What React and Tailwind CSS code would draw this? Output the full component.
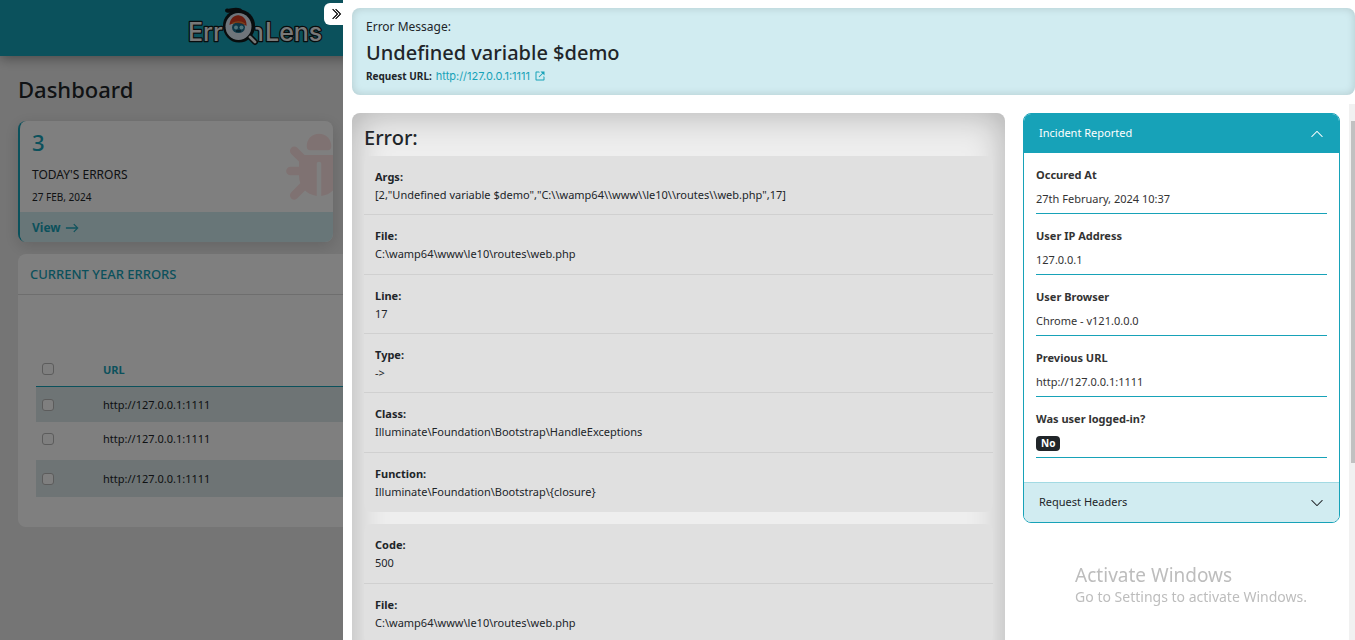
import { useState } from "react";
import { BsChevronDown, BsArrowRight, BsChevronDoubleRight } from "react-icons/bs";
import { BiLinkExternal } from "react-icons/bi";

const FRAMES = [
  {
    box: "min-h-[356px]",
    fields: [
      ["Args:", '[2,"Undefined variable $demo","C:\\\\wamp64\\\\www\\\\le10\\\\routes\\\\web.php",17]'],
      ["File:", "C:\\wamp64\\www\\le10\\routes\\web.php"],
      ["Line:", "17"],
      ["Type:", "->"],
      ["Class:", "Illuminate\\Foundation\\Bootstrap\\HandleExceptions"],
      ["Function:", "Illuminate\\Foundation\\Bootstrap\\{closure}"],
    ],
  },
  {
    box: "min-h-[120px]",
    fields: [
      ["Code:", "500"],
      ["File:", "C:\\wamp64\\www\\le10\\routes\\web.php"],
    ],
  },
];

const INCIDENT = [
  ["Occured At", "27th February, 2024 10:37"],
  ["User IP Address", "127.0.0.1"],
  ["User Browser", "Chrome - v121.0.0.0"],
  ["Previous URL", "http://127.0.0.1:1111"],
];

const ROWS = [
  { id: 1, row: "h-9 bg-[#dce9ea]" },
  { id: 2, row: "h-[38px] align-top leading-8" },
  { id: 3, row: "h-[37px] bg-[#dce9ea]" },
];

const CHECK =
  "inline-block size-3 appearance-none rounded-[3px] border border-[#b8b8b8] bg-white align-middle checked:bg-[#17a2b8]";

function Logo() {
  return (
    <svg viewBox="0 0 140 48" className="h-12 w-[140px]" role="img" aria-label="ErrorLens">
      <g
        fontFamily="Inter, 'Noto Sans', sans-serif"
        fontSize="25"
        fontWeight="500"
        fill="#f1f1f1"
        stroke="#10181b"
        strokeWidth="2.5"
        strokeLinejoin="round"
        paintOrder="stroke"
      >
        <text x="2" y="41">Err</text>
        <text x="69" y="41">ɿ</text>
        <text x="79" y="41">Lens</text>
      </g>
      <path d="M61 34 69 42" stroke="#10181b" strokeWidth="6" strokeLinecap="round" />
      <path d="M41 10.500C45 11.500 48 8.500 54 10.500" fill="none" stroke="#10181b" strokeWidth="4" strokeLinecap="round" />
      <ellipse cx="53" cy="26" rx="16" ry="16.500" fill="#10181b" />
      <ellipse cx="52.500" cy="26.500" rx="13" ry="13.500" fill="#dfeaf6" />
      <ellipse cx="52.500" cy="27.500" rx="6.500" ry="5.500" fill="#1c6f8e" />
      <circle cx="50" cy="27.500" r="2" fill="#9fe6f5" />
      <circle cx="55.500" cy="27.500" r="2" fill="#9fe6f5" />
      <path d="M50 31H55" stroke="#0b2733" strokeWidth="1.200" />
      <path d="M43.500 25C44 18 49 14.500 53.500 15.500C58.500 16.500 61 21 60.500 26C56 22.500 49 22 43.500 25Z" fill="#d63a1f" />
      <path d="M46 23.500C50 21.500 55 21.500 59 24" fill="none" stroke="#f0883a" strokeWidth="1.200" />
      <path d="M64 37 69 42" stroke="#efefef" strokeWidth="2.800" strokeLinecap="round" />
    </svg>
  );
}

function Bug() {
  return (
    <svg viewBox="0 0 66 70" className="mt-[11px] -mr-[19px] h-[70px] w-[66px] shrink-0 text-[#ffe5e5]" fill="currentColor" aria-hidden="true">
      <path d="M20.700 14C20.700 7 26 1.700 33 1.700S45.300 7 45.300 14C45.300 17 44 18.300 42 18.300H24C22 18.300 20.700 17 20.700 14Z" />
      <path d="M19 23H47Q53 23 53 29V44C53 54 46 62.500 35.200 64V40 31.500Q35.200 29.700 33 29.700T30.800 31.500V64C20 62.500 13 54 13 44V29Q13 23 19 23Z" />
      <g fill="none" stroke="currentColor" strokeWidth="8.700" strokeLinecap="round">
        <path d="M8.300 18.800 17 27.500M4.500 39H17M8.300 63.300 19 52.500" />
        <path d="M57.700 18.800 49 27.500M61.500 39H49M57.700 63.300 47 52.500" />
      </g>
    </svg>
  );
}

function Dashboard() {
  return (
    <div className="min-h-screen bg-[#ebebeb] text-[#212529]">
      <header className="h-14 bg-[#17a2b8] pl-[186px] shadow-[0_2px_12px_rgba(0,0,0,0.4)]">
        <Logo />
      </header>
      <main className="px-[18px] pt-[15px]">
        <h1 className="text-[22px] leading-9 font-medium">Dashboard</h1>
        <section className="mt-[14px] w-[315px] overflow-hidden rounded-lg border-l-2 border-[#17a2b8] bg-white shadow-[0_4px_16px_rgba(0,0,0,0.15)]">
          <div className="flex h-[91px] justify-between pl-3">
            <div>
              <p className="pt-[7px] text-[22px] leading-7 font-medium text-[#17a2b8]">3</p>
              <p className="mt-[9px] text-xs leading-5">TODAY'S ERRORS</p>
              <p className="mt-1 text-[10px] leading-4">27 FEB, 2024</p>
            </div>
            <Bug />
          </div>
          <a href="#errors" className="flex h-[30px] items-center gap-1 bg-[#d1ecf1] pt-0.5 pl-3 text-xs font-bold text-[#17a2b8]">
            View <BsArrowRight className="size-[14px] stroke-[0.5]" />
          </a>
        </section>
        <section id="errors" className="mt-3 h-[273px] rounded-lg bg-white">
          <h2 className="border-b border-[#dcdcdc] px-3 pt-2 pb-2 text-[13px] leading-6 font-medium text-[#17a2b8]">
            CURRENT YEAR ERRORS
          </h2>
          <div className="px-[18px] pt-14">
            <table className="w-full text-left text-[11px]">
              <thead>
                <tr className="h-[35px] border-b border-[#17a2b8]">
                  <th className="w-[67px] pl-1.5">
                    <input type="checkbox" aria-label="Select all" className={CHECK} />
                  </th>
                  <th className="pt-1 font-bold text-[#17a2b8]">URL</th>
                </tr>
              </thead>
              <tbody>
                {ROWS.map((r) => (
                  <tr key={r.id} className={r.row}>
                    <td className="pb-px pl-1.5">
                      <input type="checkbox" aria-label={`Select error ${r.id}`} className={CHECK} />
                    </td>
                    <td className="pt-px">http://127.0.0.1:1111</td>
                  </tr>
                ))}
              </tbody>
            </table>
          </div>
        </section>
      </main>
    </div>
  );
}

function ErrorPanel() {
  return (
    <section className="min-w-0 flex-1 self-start rounded-lg bg-[#eeeeee] px-3 pt-[9px] pb-8 shadow-[inset_0_0_36px_rgba(0,0,0,0.28)]">
      <h2 className="pb-0.5 text-xl leading-8 font-medium">Error:</h2>
      {FRAMES.map((frame, i) => (
        <dl key={i} className={`mb-3 grid auto-rows-fr rounded-lg bg-[#e0e0e0] ${frame.box}`}>
          {frame.fields.map(([label, value]) => (
            <div key={label} className="border-b border-[#d0d0d0] px-[11px] pt-3 pb-[10px] last:border-b-0">
              <dt className="text-[11px] leading-[18px] font-bold">{label}</dt>
              <dd className="text-[11px] leading-[18px]">{value}</dd>
            </div>
          ))}
        </dl>
      ))}
    </section>
  );
}

function Incident() {
  const [open, setOpen] = useState(true);
  return (
    <aside className="w-[317px] shrink-0 self-start overflow-hidden rounded-lg border border-[#17a2b8] bg-white text-[11px]">
      <button
        type="button"
        aria-expanded={open}
        onClick={() => setOpen(!open)}
        className="flex h-[39px] w-full items-center justify-between bg-[#17a2b8] px-[15px] text-white"
      >
        Incident Reported <BsChevronDown className="size-[14px] rotate-180" />
      </button>
      {open && (
        <dl className="px-3 pb-6 text-[#333333]">
          {INCIDENT.map(([label, value]) => (
            <div key={label} className="h-[61px] border-b border-[#17a2b8] pt-3">
              <dt className="leading-5 font-bold">{label}</dt>
              <dd className="mt-1 leading-5">{value}</dd>
            </div>
          ))}
          <div className="h-[61px] border-b border-[#17a2b8] pt-3">
            <dt className="leading-5 font-bold">Was user logged-in?</dt>
            <dd className="mt-[7px] flex">
              <span className="rounded bg-[#212529] px-[5px] text-[10px] leading-[15px] font-bold text-white">No</span>
            </dd>
          </div>
        </dl>
      )}
      <button
        type="button"
        className="flex h-10 w-full items-center justify-between border-t border-[#a2dae3] bg-[#d1ecf1] px-[15px] text-[#212529]"
      >
        Request Headers <BsChevronDown className="size-[14px]" />
      </button>
    </aside>
  );
}

export default function App() {
  return (
    <div className="h-screen overflow-hidden font-['Noto_Sans','Open_Sans',sans-serif]">
      <Dashboard />
      <div className="fixed inset-0 bg-black/50" />
      <div className="fixed inset-y-0 right-0 left-[343px] flex flex-col bg-white pt-2 pl-[9px] text-[#212529]">
        <button
          type="button"
          aria-label="Close panel"
          className="absolute top-[3px] -left-[19px] flex h-[22px] w-[23px] items-center justify-center rounded-l-md bg-white text-black"
        >
          <BsChevronDoubleRight className="size-3 stroke-[0.8]" />
        </button>
        <section className="shrink-0 rounded-lg bg-[#d1ecf1] px-[14px] pt-2 pb-[11px] shadow-[inset_0_0_8px_rgba(0,0,0,0.15)]">
          <p className="text-xs leading-[22px]">Error Message:</p>
          <h1 className="text-xl leading-[30px] font-medium">Undefined variable $demo</h1>
          <p className="flex items-center text-[10px] leading-4">
            <strong className="mr-1 font-bold">Request URL:</strong>
            <a href="http://127.0.0.1:1111" className="flex items-center gap-1 font-['Inter','Noto_Sans',sans-serif] text-[11px] text-[#17a2b8]">
              http://127.0.0.1:1111 <BiLinkExternal className="size-3" />
            </a>
          </p>
        </section>
        <div className="mt-[9px] flex min-h-0 flex-1">
          <div className="flex min-w-0 flex-1 gap-[18px] overflow-hidden pt-[9px] pr-[9px]">
            <ErrorPanel />
            <Incident />
          </div>
          <div className="w-1.5 bg-[#f1f1f1] pt-[17px] pl-0.5">
            <div className="h-[342px] bg-[#c1c1c1]" />
          </div>
        </div>
      </div>
      <div className="pointer-events-none fixed right-12 bottom-[33px] text-[#bdbdbd]">
        <p className="text-[19px] leading-6">Activate Windows</p>
        <p className="text-sm leading-5">Go to Settings to activate Windows.</p>
      </div>
    </div>
  );
}
